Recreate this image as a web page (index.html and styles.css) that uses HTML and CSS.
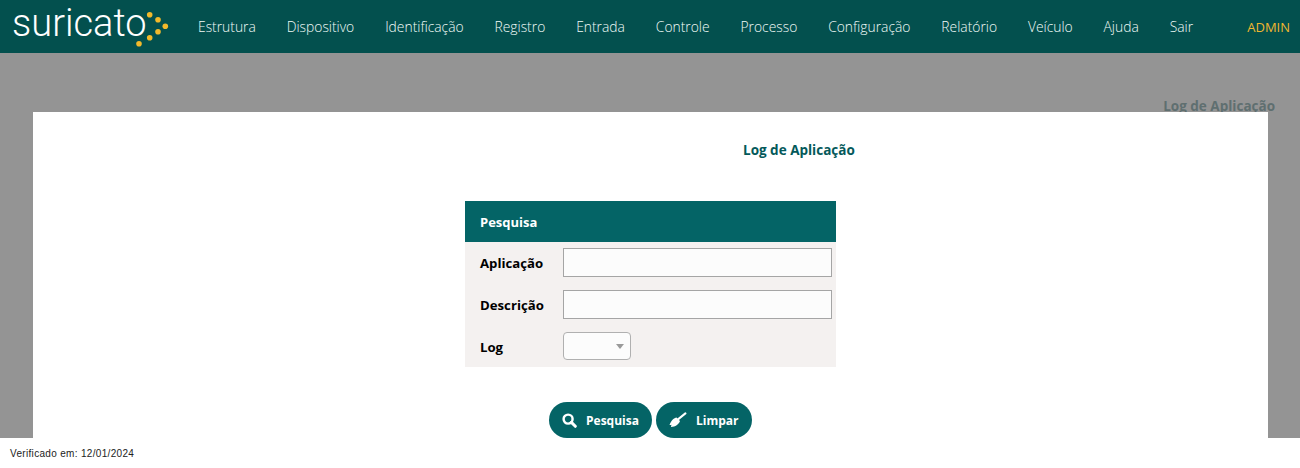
FILE: index.html
```html
<!doctype html>
<html>
	<head>
		<meta charset="utf-8">
		<title>Log de Aplicação</title>
		<link rel="stylesheet" href="styles.css">
	</head>
	<body>

		<header class="topbar">
			<a class="logo">
				<span class="logo-text">suricato</span>
				<svg class="logo-dots" width="38" height="42" viewBox="0 0 38 42">
					<circle cx="18.7" cy="8.7" r="2.8"/>
					<circle cx="27" cy="13.7" r="2.8"/>
					<circle cx="34.3" cy="20.3" r="2.8"/>
					<circle cx="27" cy="25.7" r="2.8"/>
					<circle cx="18.7" cy="31.7" r="2.8"/>
					<circle cx="8" cy="37.7" r="2.8"/>
				</svg>
			</a>
			<nav class="menu">
				<a>Estrutura</a>
				<a>Dispositivo</a>
				<a>Identificação</a>
				<a>Registro</a>
				<a>Entrada</a>
				<a>Controle</a>
				<a>Processo</a>
				<a>Configuração</a>
				<a>Relatório</a>
				<a>Veículo</a>
				<a>Ajuda</a>
				<a>Sair</a>
			</nav>
			<span class="user">ADMIN</span>
		</header>

		<main class="backdrop">
			<div class="page-title">Log de Aplicação</div>

			<section class="modal">
				<h2 class="modal-title">Log de Aplicação</h2>

				<form class="search">
					<div class="search-head">Pesquisa</div>
					<div class="search-body">
						<label class="row">
							<span class="row-label">Aplicação</span>
							<input class="text-field" type="text">
						</label>
						<label class="row">
							<span class="row-label">Descrição</span>
							<input class="text-field" type="text">
						</label>
						<div class="row">
							<span class="row-label">Log</span>
							<div class="select-field"><i class="caret"></i></div>
						</div>
					</div>
				</form>

				<div class="actions">
					<button class="pill" type="button">
						<svg width="15" height="15" viewBox="0 0 16 16">
							<circle cx="6.5" cy="6.5" r="4.8" fill="none" stroke="#fff" stroke-width="2.6"/>
							<path d="M10 10l4.2 4.2" stroke="#fff" stroke-width="3.2" stroke-linecap="round"/>
						</svg>
						Pesquisa
					</button>
					<button class="pill pill-clear" type="button">
						<svg width="18" height="16" viewBox="0 0 18 16">
							<path d="M16.4 1.4L9 7.4" stroke="#fff" stroke-width="2" stroke-linecap="round"/>
							<path d="M7.5 5.5C5 6 2.5 8 .5 13c1 .2 1.5 0 2-.3-.2.7-.3 1.3-.5 2.2 4 .1 8-2.4 9-5.9z" fill="#fff"/>
						</svg>
						Limpar
					</button>
				</div>
			</section>
		</main>

		<footer class="checked">Verificado em: 12/01/2024</footer>

	</body>
</html>
```

FILE: styles.css
```css
html, body {
	margin: 0;
	height: 468px;
	overflow: hidden;
	background: #fff;
	font-family: "Open Sans", sans-serif;
}

.topbar {
	display: flex;
	align-items: center;
	height: 53px;
	background: #03504e;
	color: #fff;
}

.logo {
	display: flex;
	align-items: center;
	width: 198px;
	flex: none;
	padding-left: 12px;
	box-sizing: border-box;
}
	.logo-text {
		font-family: Roboto, sans-serif;
		font-weight: 300;
		font-size: 38px;
		line-height: 45px;
		margin-bottom: 6px;
		color: #fff;
	}
	.logo-dots {
		fill: #f2b92b;
		align-self: flex-start;
		margin: 5px 0 0 -16px;
	}

.menu {
	display: flex;
	gap: 30.9px;
	flex: 1;
	font-weight: 300;
	font-size: 13.85px;
	color: #f2fbf8;
}

.user {
	margin-right: 10px;
	font-size: 13px;
	color: #f0b72f;
}

.backdrop {
	position: relative;
	height: 385px;
	overflow: hidden;
	background: #949494;
}

.page-title {
	padding: 44px 25px 0 0;
	text-align: right;
	font-size: 13.5px;
	font-weight: 700;
	color: #5f6f70;
}

.modal {
	position: absolute;
	left: 33px;
	top: 59px;
	width: 1235px;
	height: 340px;
	background: #fff;
}

.modal-title {
	margin: 29px 0 0;
	padding-left: 710px;
	font-size: 13.5px;
	line-height: 18px;
	font-weight: 700;
	color: #03595a;
}

.search {
	width: 371px;
	margin: 42px 0 0 432px;
}
	.search-head {
		height: 41px;
		padding-left: 15px;
		line-height: 42px;
		font-size: 13px;
		font-weight: 700;
		color: #fff;
		background: #046466;
	}
	.search-body {
		display: flex;
		flex-direction: column;
		gap: 13px;
		height: 125px;
		padding-top: 6px;
		box-sizing: border-box;
		background: #f4f1f0;
	}

.row {
	display: flex;
	align-items: center;
	padding-left: 15px;
	height: 29px;
}
	.row-label {
		width: 83px;
		flex: none;
		font-size: 13.2px;
		font-weight: 700;
		color: #000;
	}

.text-field {
	width: 269px;
	height: 29px;
	padding: 0;
	box-sizing: border-box;
	border: 1px solid #a5a5a5;
	background: #fcfcfc;
}

.select-field {
	position: relative;
	width: 68px;
	height: 28px;
	margin-top: -1px;
	box-sizing: border-box;
	border: 1px solid #b0b0b0;
	border-radius: 4px;
	background: #fcfcfc;
}
	.caret {
		position: absolute;
		right: 6px;
		top: 11px;
		border-top: 5px solid #9a9a9a;
		border-left: 4px solid transparent;
		border-right: 4px solid transparent;
	}

.actions {
	display: flex;
	gap: 4px;
	margin: 35px 0 0 516px;
}

.pill {
	display: flex;
	align-items: center;
	gap: 9px;
	height: 36px;
	width: 103px;
	padding: 0 0 0 13px;
	border: none;
	border-radius: 18px;
	font-family: "Open Sans", sans-serif;
	font-size: 12px;
	font-weight: 700;
	color: #fff;
	background: #046466;
}
.pill-clear {
	width: 96px;
	gap: 9px;
}

.checked {
	padding: 10px 0 0 10px;
	font-family: "Liberation Sans", sans-serif;
	font-size: 10px;
	letter-spacing: 0.32px;
	line-height: 12px;
	color: #222;
}
```
